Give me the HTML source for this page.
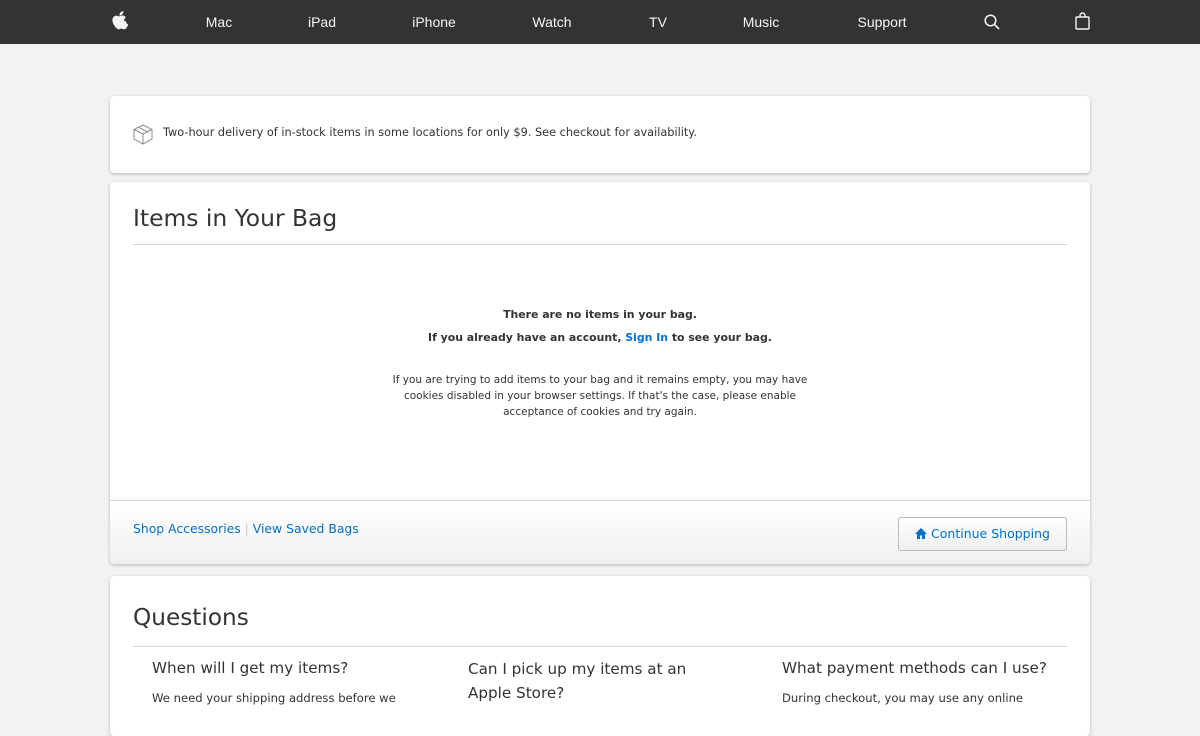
<!DOCTYPE html>
<html><head><style>
*{margin:0;padding:0;box-sizing:border-box}
body{width:1200px;height:710px;overflow:hidden;background:#f2f2f2;font-family:"DejaVu Sans","Liberation Sans",sans-serif;color:#333}
.nav{height:44px;background:#333;position:relative;color:#f5f5f5;font-family:"Liberation Sans",sans-serif;font-size:14px}
.nav span{position:absolute;top:14px;transform:translateX(-50%)}
.card{position:absolute;left:110px;width:980px;background:#fff;border-radius:4px;box-shadow:0 1px 3px rgba(0,0,0,.25)}
a{color:#0070c9;text-decoration:none}
</style></head><body>
<div class="nav">
<svg style="position:absolute;left:112px;top:11px" width="17" height="19" viewBox="0 0 17 20"><path fill="#f5f5f5" d="M11.5 0c.1 1.3-.4 2.5-1.1 3.3-.8.9-1.9 1.5-3 1.4-.1-1.2.5-2.4 1.2-3.2C9.4.7 10.6.1 11.5 0zM14.3 10.7c0 2.6 2.3 3.5 2.3 3.5s-1.7 5-4 5.1c-1.2 0-1.6-.8-3-.8s-1.9.7-3 .8C4.4 19.4 0 13.9 0 9.8 0 6.3 2.4 4.900 4.1 4.9c1.2 0 2.3.8 3 .8.7 0 2-1 3.500-.9.6 0 2.4.2 3.5 1.9-.1.1-1.8 1.1-1.8 3.9z"/></svg>
<span style="left:219px">Mac</span><span style="left:322px">iPad</span><span style="left:434px">iPhone</span><span style="left:552px">Watch</span><span style="left:658px">TV</span><span style="left:761px">Music</span><span style="left:882px">Support</span>
<svg style="position:absolute;left:984px;top:14px" width="16" height="16" viewBox="0 0 16 16"><circle cx="6.5" cy="6.5" r="5.3" fill="none" stroke="#f5f5f5" stroke-width="1.5"/><path d="M10.5 10.5L15 15" stroke="#f5f5f5" stroke-width="1.6"/></svg>
<svg style="position:absolute;left:1075px;top:12px" width="15" height="18" viewBox="0 0 15 18"><rect x="1" y="5" width="13" height="12" rx="1" fill="none" stroke="#f5f5f5" stroke-width="1.4"/><path d="M5 5V3.5a2.5 2.5 0 0 1 5 0V5" fill="none" stroke="#f5f5f5" stroke-width="1.4"/></svg>
</div>
<div class="card" style="top:96px;height:77px">
<svg style="position:absolute;left:23px;top:28px" width="20" height="21" viewBox="0 0 20 21"><path d="M10 1L19 5.5V15L10 20 1 15V5.5zM1 5.5L10 10 19 5.5M10 10V20M5.5 3.2L14.5 7.8" fill="none" stroke="#888" stroke-width="1"/></svg>
<div style="position:absolute;left:53px;top:30px;font-size:11.3px;color:#333">Two-hour delivery of in-stock items in some locations for only $9. See checkout for availability.</div>
</div>
<div class="card" style="top:182px;height:382px">
<div style="position:absolute;left:23px;top:22px;font-size:23.4px;color:#333">Items in Your Bag</div>
<div style="position:absolute;left:23px;right:23px;top:62px;border-top:1px solid #d6d6d6"></div>
<div style="position:absolute;left:0;right:0;top:121px;text-align:center;font-size:10.9px;font-weight:bold;line-height:23px">There are no items in your bag.<br>If you already have an account, <a href="#">Sign In</a> to see your bag.</div>
<div style="position:absolute;left:0;right:0;top:190px;text-align:center;font-size:10.5px;line-height:16px">If you are trying to add items to your bag and it remains empty, you may have<br>cookies disabled in your browser settings. If that's the case, please enable<br>acceptance of cookies and try again.</div>
<div style="position:absolute;left:0;right:0;top:318px;bottom:0;border-top:1px solid #d6d6d6;background:linear-gradient(#fff,#f0f0f0);border-radius:0 0 4px 4px">
<div style="position:absolute;left:23px;top:20px;font-size:12.4px"><a href="#">Shop Accessories</a><span style="color:#ccc"> | </span><a href="#">View Saved Bags</a></div>
<div style="position:absolute;right:23px;top:16px;width:169px;height:34px;border:1px solid #bbb;border-radius:3px;background:linear-gradient(#fff,#efefef);font-size:12.5px;color:#0070c9;text-align:center;line-height:32px">
<svg width="12" height="11" viewBox="0 0 12 11" style="vertical-align:-1px"><path d="M6 0L12 6H10V11H7V7.5H5V11H2V6H0z" fill="#0070c9"/></svg> Continue Shopping</div>
</div></div>
<div class="card" style="top:576px;height:160px">
<div style="position:absolute;left:23px;top:28px;font-size:23.2px">Questions</div>
<div style="position:absolute;left:23px;right:23px;top:70px;border-top:1px solid #d6d6d6"></div>
<div style="position:absolute;left:42px;top:83px;font-size:15.2px">When will I get my items?</div>
<div style="position:absolute;left:42px;top:115px;font-size:11.6px">We need your shipping address before we</div>
<div style="position:absolute;left:358px;top:81px;font-size:15.2px;line-height:24px">Can I pick up my items at an<br>Apple Store?</div>
<div style="position:absolute;left:672px;top:83px;font-size:15.2px">What payment methods can I use?</div>
<div style="position:absolute;left:672px;top:115px;font-size:11.6px">During checkout, you may use any online</div>
</div>
</body></html>
